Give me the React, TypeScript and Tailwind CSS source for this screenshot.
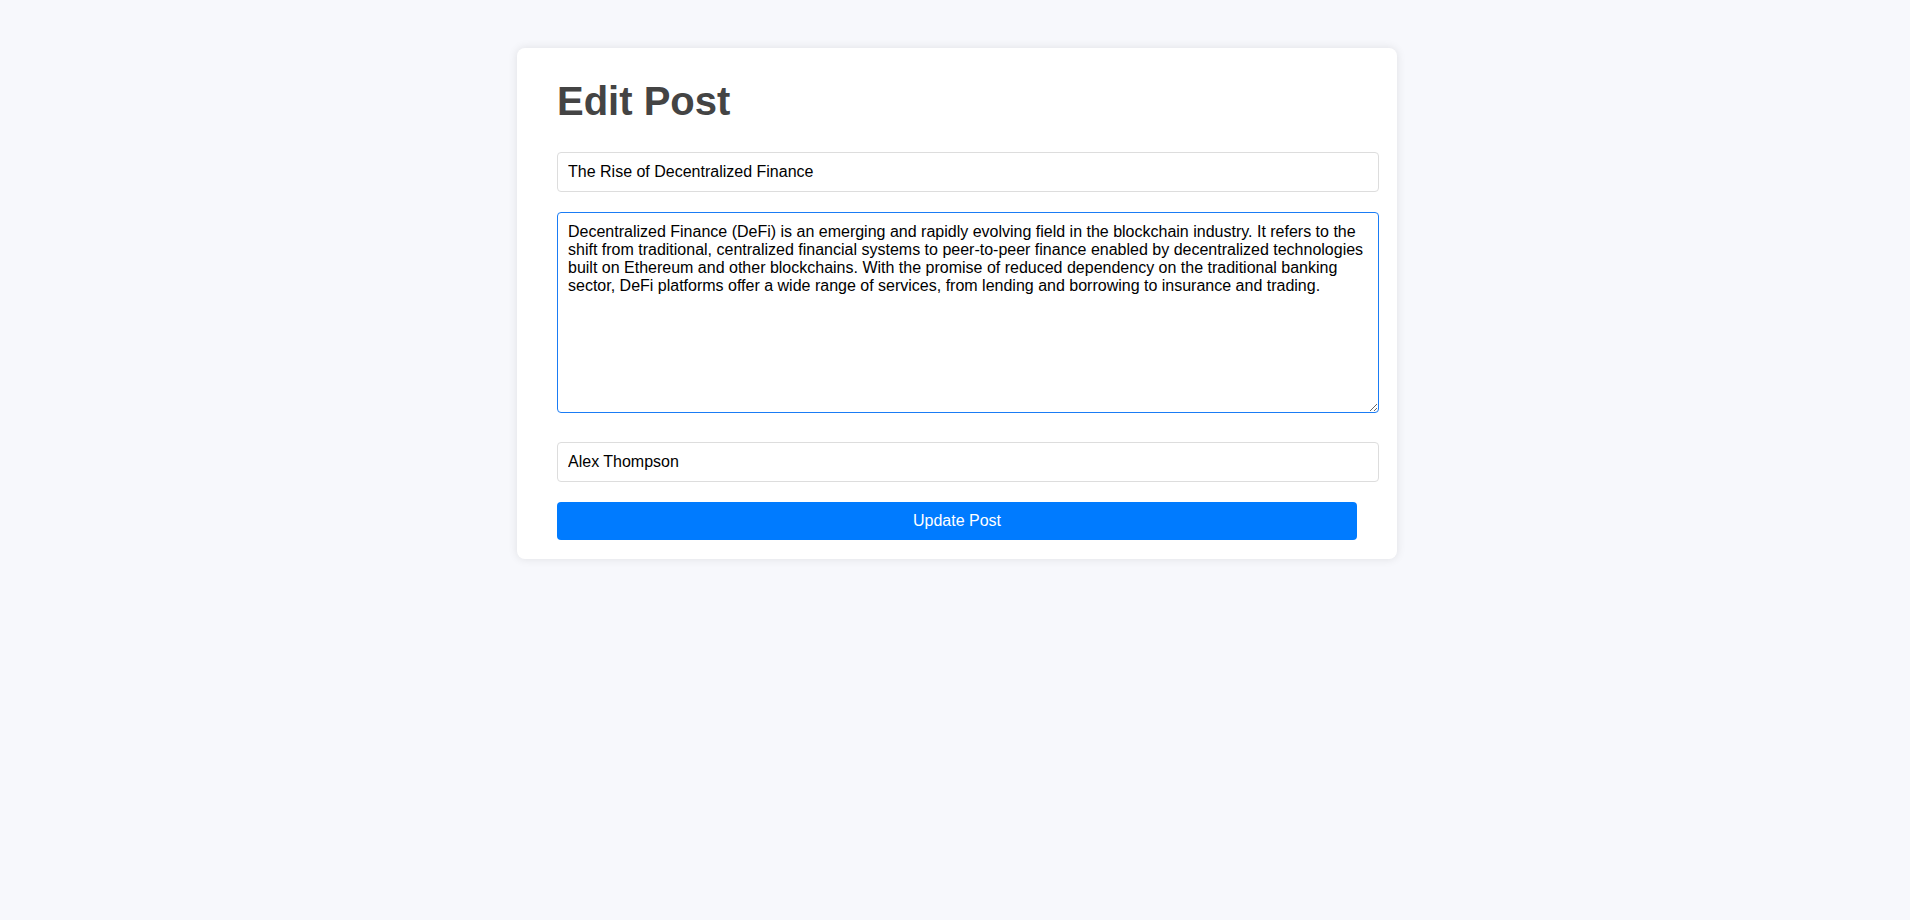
import { useEffect, useRef, useState } from "react";

const BODY =
  "Decentralized Finance (DeFi) is an emerging and rapidly evolving field in the blockchain industry. It refers to the shift from traditional, centralized financial systems to peer-to-peer finance enabled by decentralized technologies built on Ethereum and other blockchains. With the promise of reduced dependency on the traditional banking sector, DeFi platforms offer a wide range of services, from lending and borrowing to insurance and trading.";

export default function App() {
  const [title, setTitle] = useState("The Rise of Decentralized Finance");
  const [content, setContent] = useState(BODY);
  const [author, setAuthor] = useState("Alex Thompson");
  const areaRef = useRef<HTMLTextAreaElement>(null);

  useEffect(() => {
    const el = areaRef.current;
    if (el) {
      el.focus();
      el.setSelectionRange(el.value.length, el.value.length);
    }
  }, []);

  const field =
    "block w-[822px] box-border px-[10px] py-[10px] text-[16px] leading-[18px] text-black bg-white border border-[#dddddd] rounded-[4px] outline-none";

  return (
    <div className="min-h-screen bg-[#f7f8fc] pt-[48px] pl-[4px] flex justify-center items-start font-['Liberation_Sans',Arial,sans-serif]">
      <div className="w-[880px] box-border bg-white rounded-[8px] shadow-[0_0_10px_rgba(0,0,0,0.1)] px-[40px] pt-[30px] pb-[19px]">
        <h1 className="text-[40px] leading-[46px] font-bold text-[#444444] mb-[28px]">Edit Post</h1>
        <form onSubmit={(e) => e.preventDefault()} className="flex flex-col">
          <input
            className={field}
            value={title}
            onChange={(e) => setTitle(e.target.value)}
          />
          <textarea
            ref={areaRef}
            className="block mt-[20px] w-[822px] h-[201px] box-border px-[10px] py-[10px] text-[16px] leading-[18px] text-black bg-white border border-[#1a7cf5] rounded-[4px] outline-none font-['Liberation_Sans',Arial,sans-serif]"
            value={content}
            onChange={(e) => setContent(e.target.value)}
          />
          <input
            className={field + " mt-[29px]"}
            value={author}
            onChange={(e) => setAuthor(e.target.value)}
          />
          <button
            type="submit"
            className="mt-[20px] w-[800px] h-[38px] bg-[#007bff] text-white text-[16px] rounded-[4px] cursor-pointer"
          >
            Update Post
          </button>
        </form>
      </div>
    </div>
  );
}
